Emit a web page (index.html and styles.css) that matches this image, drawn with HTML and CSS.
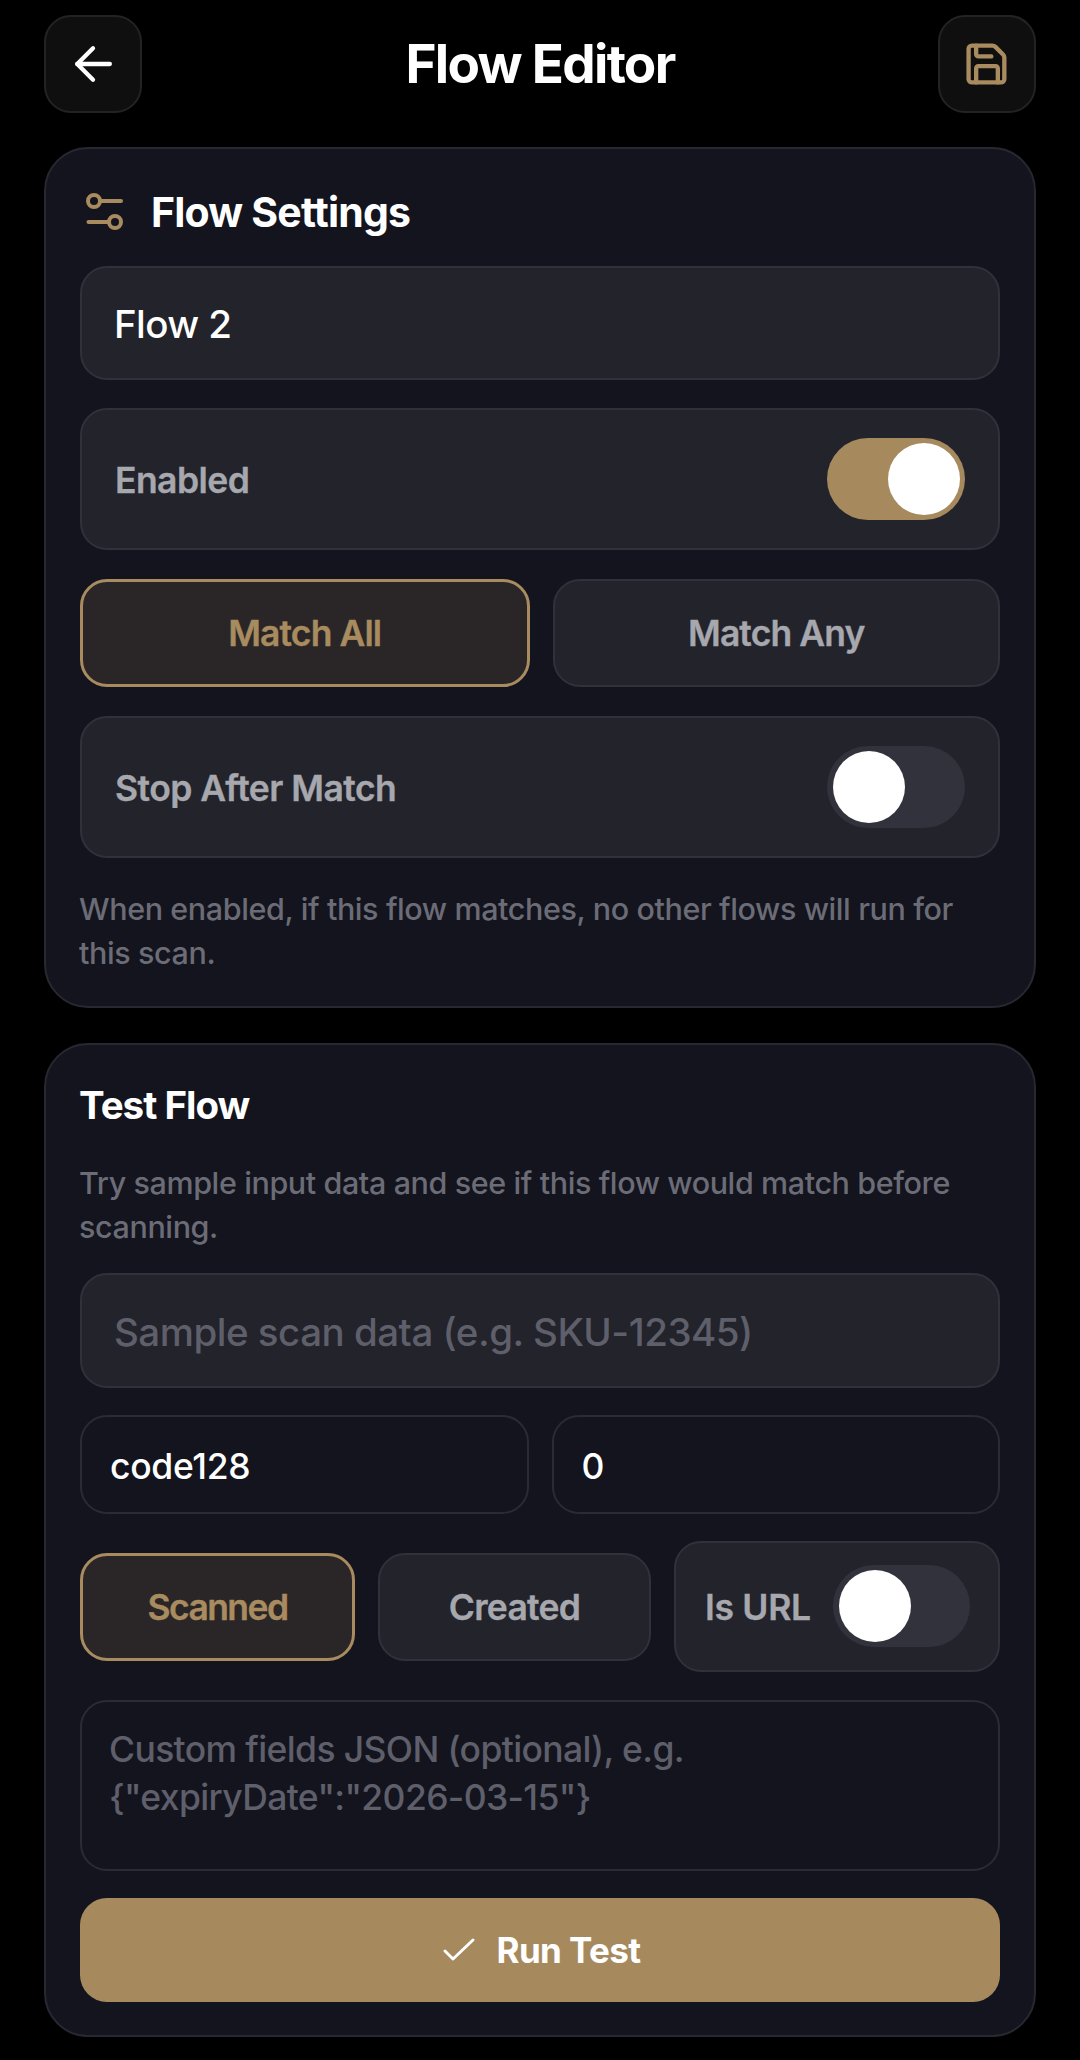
FILE: index.html
```html
<!DOCTYPE html>
<html lang="en">
<head>
<meta charset="utf-8">
<title>Flow Editor</title>
<link rel="stylesheet" href="styles.css">
</head>
<body>
<main class="screen">
  <header class="topbar">
    <button class="icon-btn" aria-label="Back">
      <svg class="icon" viewBox="0 0 24 24" fill="none" stroke="#fff" stroke-width="1.900" stroke-linecap="round" stroke-linejoin="round"><path d="M19.500 12H5"/><path d="M12 5l-7 7 7 7"/></svg>
    </button>
    <h1 class="page-title">Flow Editor</h1>
    <button class="icon-btn" aria-label="Save">
      <svg class="icon icon-save" viewBox="0 0 24 24" fill="none" stroke="#a88b5f" stroke-width="2" stroke-linecap="round" stroke-linejoin="round"><path d="M5 3.500h9.500a2 2 0 0 1 1.400.6l3.500 3.500a2 2 0 0 1 .6 1.400V19a1.500 1.500 0 0 1-1.500 1.500H5A1.500 1.500 0 0 1 3.500 19V5A1.500 1.500 0 0 1 5 3.500z"/><path d="M7 20.500v-6.500a1 1 0 0 1 1-1h8a1 1 0 0 1 1 1v6.500"/><path d="M7 3.500v4a1 1 0 0 0 1 1h6"/></svg>
    </button>
  </header>

  <section class="card settings">
    <div class="card-head">
      <svg class="head-icon" viewBox="0 0 37 37" fill="none" stroke="#a88b5f" stroke-width="4" stroke-linecap="round"><circle cx="8" cy="8" r="6"/><path d="M14 8h21"/><circle cx="29" cy="29" r="6"/><path d="M2.500 29H23"/></svg>
      <h2 class="card-title">Flow Settings</h2>
    </div>
    <input class="field field-lg" type="text" value="Flow 2" aria-label="Flow name">
    <div class="switch-row">
      <span class="label">Enabled</span>
      <span class="toggle on"><span class="knob"></span></span>
    </div>
    <div class="seg-row">
      <button class="seg active">Match All</button>
      <button class="seg">Match Any</button>
    </div>
    <div class="switch-row">
      <span class="label">Stop After Match</span>
      <span class="toggle"><span class="knob"></span></span>
    </div>
    <p class="note note-settings">When enabled, if this flow matches, no other flows will run for this scan.</p>
  </section>

  <section class="card test">
    <h2 class="card-title test-title">Test Flow</h2>
    <p class="note note-test">Try sample input data and see if this flow would match before scanning.</p>
    <input class="field field-lg sample" type="text" placeholder="Sample scan data (e.g. SKU-12345)" aria-label="Sample scan data">
    <div class="pair-row">
      <input class="field field-sm" type="text" value="code128" aria-label="Symbology">
      <input class="field field-sm" type="text" value="0" aria-label="Count">
    </div>
    <div class="mode-row">
      <button class="seg mode active">Scanned</button>
      <button class="seg mode">Created</button>
      <div class="url-box">
        <span class="label url-label">Is URL</span>
        <span class="toggle"><span class="knob"></span></span>
      </div>
    </div>
    <textarea class="field json" aria-label="Custom fields" placeholder="Custom fields JSON (optional), e.g. {&quot;expiryDate&quot;:&quot;2026-03-15&quot;}"></textarea>
    <button class="run">
      <svg class="run-icon" viewBox="0 0 32 24" fill="none" stroke="#fff" stroke-width="2.900" stroke-linecap="round" stroke-linejoin="round"><path d="M2 13l8 8L30 2"/></svg>
      <span>Run Test</span>
    </button>
  </section>
</main>
</body>
</html>
```
FILE: styles.css
```css
* { box-sizing: border-box; }
html, body { margin: 0; padding: 0; background: #000; }
body { font-family: Inter, "Liberation Sans", sans-serif; color: #fff; }
button, input, textarea { font-family: inherit; margin: 0; }
.screen { width: 1080px; height: 2060px; padding: 15px 44px 0; overflow: hidden; }

.topbar { display: flex; align-items: center; justify-content: space-between; height: 97px; margin-bottom: 35px; }
.icon-btn { width: 98px; height: 98px; padding: 0; display: flex; align-items: center; justify-content: center; background: #0f0f10; border: 2px solid #232324; border-radius: 27px; }
.icon { width: 54px; height: 54px; }
.icon-save { width: 52px; height: 52px; }
.page-title { margin: 0; font-size: 53px; font-weight: 700; letter-spacing: -1.700px; line-height: 60px; }

.card { background: #13141e; border: 2px solid #272831; border-radius: 44px; padding: 0 34px; display: flex; flex-direction: column; }
.settings { height: 861px; margin-bottom: 35px; }
.test { height: 994px; }

.card-head { display: flex; align-items: center; gap: 28px; height: 60px; margin: 33px 0 24px 6px; }
.head-icon { width: 37px; height: 37px; margin-top: -2px; }
.card-title { margin: 0; font-size: 41px; font-weight: 700; letter-spacing: -0.8px; line-height: 60px; }
.test-title { margin: 30px 0 0 -1px; font-size: 38.500px; letter-spacing: -1px; }

.field { display: block; width: 100%; color: #fff; background: #22232b; border: 2px solid #30313b; border-radius: 27px; outline: none; }
.field::placeholder { color: #5e5f6a; opacity: 1; }
.field-lg { height: 114px; padding: 2px 32px 0; font-size: 38.500px; font-weight: 450; letter-spacing: -0.6px; }
.switch-row { display: flex; align-items: center; justify-content: space-between; height: 142px; margin-top: 28px; padding: 0 33px; background: #22232b; border: 2px solid #30313b; border-radius: 27px; }
.label { padding-top: 2px; color: #a7a7ae; font-size: 35.500px; font-weight: 600; letter-spacing: -0.55px; -webkit-text-stroke: 0.35px #a7a7ae; }
.url-label { letter-spacing: -0.3px; }

.toggle { position: relative; flex: none; width: 138px; height: 82px; margin-top: -1px; border-radius: 41px; background: #31323b; }
.toggle.on { background: #a68a5e; }
.knob { position: absolute; top: 5px; left: 6px; width: 72px; height: 72px; border-radius: 50%; background: #fff; }
.toggle.on .knob { left: 61px; }

.seg-row { display: flex; gap: 23px; margin-top: 29px; margin-bottom: 1px; }
.seg { flex: 1 1 0; height: 108px; padding: 0; color: #a7a7ae; background: #22232b; border: 2px solid #30313b; border-radius: 27px; font-size: 35.500px; font-weight: 600; letter-spacing: -0.9px; -webkit-text-stroke: 0.35px currentColor; }
.seg.active { color: #a88b5f; background: #2a2527; border: 3px solid #a88b5f; }

.note { margin: 0 0 0 -1px; color: #6b6c76; font-size: 30.500px; font-weight: 500; letter-spacing: -0.4px; line-height: 44px; }
.note-settings { margin-top: 29px; }
.note-test { margin-top: 26px; }

.sample { height: 115px; margin-top: 24px; letter-spacing: -0.5px; }
.pair-row { display: flex; gap: 23px; margin-top: 27px; }
.field-sm { flex: 1 1 0; min-width: 0; height: 99px; padding: 3px 28px 0; font-size: 35.500px; font-weight: 450; letter-spacing: -0.3px; background: #13141e; border-color: #2a2b34; }

.mode-row { display: flex; align-items: center; gap: 23px; margin-top: 27px; }
.mode { padding-top: 1px; letter-spacing: -0.7px; }
.mode.active { letter-spacing: -1.600px; }
.url-box { flex: none; width: 326px; height: 131px; display: flex; align-items: center; justify-content: space-between; padding: 0 28px 0 29px; background: #22232b; border: 2px solid #30313b; border-radius: 27px; }
.url-box .toggle { width: 137px; }

.json { height: 171px; margin-top: 28px; padding: 24px 27px; font-size: 35.500px; font-weight: 450; letter-spacing: -0.630px; line-height: 47.500px; resize: none; background: #13141e; border-color: #2a2b34; }

.run { display: flex; align-items: center; justify-content: center; gap: 22px; height: 104px; margin-top: 27px; padding: 0 0 0 3px; color: #fff; background: #a68a5e; border: 0; border-radius: 27px; font-size: 35px; font-weight: 700; letter-spacing: -0.6px; }
.run-icon { width: 32px; height: 24px; }
```
